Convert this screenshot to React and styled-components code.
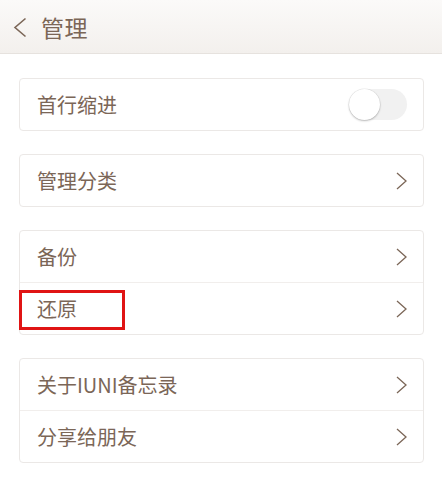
import styled, {createGlobalStyle} from 'styled-components';

const Global = createGlobalStyle`
    html, body {
        margin: 0;
        padding: 0;
        background: #ffffff;
    }
    body {
        font-family: "Noto Sans CJK SC", "Noto Sans", sans-serif;
        color: #7b6657;
    }
`;

const Chevron = ({left}) => (
    <svg width={left ? 14 : 11} height={left ? 21 : 18} viewBox={left ? '0 0 14 21' : '0 0 11 18'} fill="none">
        {left ? (
            <path d="M12.5 1.5 L2 10.5 L12.5 19.5" stroke="#7b6657" strokeWidth="1.6" />
        ) : (
            <path d="M1 1 L10 9 L1 17" stroke="#7b6657" strokeWidth="1.3" />
        )}
    </svg>
);

export default function App() {
    return (
        <Page>
            <Global />
            <Header>
                <BackButton><Chevron left /></BackButton>
                <Title>管理</Title>
            </Header>
            <Content>
                <Card>
                    <Row>
                        <Label>首行缩进</Label>
                        <Toggle><Knob /></Toggle>
                    </Row>
                </Card>
                <Card>
                    <Row>
                        <Label>管理分类</Label>
                        <Chevron />
                    </Row>
                </Card>
                <Card>
                    <Row>
                        <Label>备份</Label>
                        <Chevron />
                    </Row>
                    <Row divided>
                        <Label>还原</Label>
                        <Chevron />
                        <Highlight />
                    </Row>
                </Card>
                <Card>
                    <Row>
                        <Label>关于IUNI备忘录</Label>
                        <Chevron />
                    </Row>
                    <Row divided>
                        <Label>分享给朋友</Label>
                        <Chevron />
                    </Row>
                </Card>
            </Content>
        </Page>
    );
}

const Page = styled.div`
    width: 442px;
    min-height: 491px;
    background: #ffffff;
`;

const Header = styled.header`
    height: 54px;
    display: flex;
    align-items: center;
    background: linear-gradient(180deg, #fbfaf9 0%, #f3f0ed 100%);
    border-bottom: 1px solid #e6e2de;
    box-sizing: border-box;
`;

const BackButton = styled.div`
    width: 41px;
    padding-left: 13px;
    box-sizing: border-box;
    display: flex;
    align-items: center;
    margin-top: 1px;
`;

const Title = styled.h1`
    margin: 0;
    font-size: 23px;
    font-weight: 400;
    color: #7b6657;
    letter-spacing: 0.5px;
`;

const Content = styled.main`
    padding: 24px 18px 0 19px;
    display: flex;
    flex-direction: column;
    gap: 23px;
`;

const Card = styled.section`
    border: 1px solid #ebe8e6;
    border-radius: 4px;
    background: #fff;
`;

const Row = styled.div`
    position: relative;
    height: 51px;
    display: flex;
    align-items: center;
    justify-content: space-between;
    padding: 0 16px 0 17px;
    border-top: ${({divided}) => (divided ? '1px solid #f1eeec' : 'none')};
    box-sizing: ${({divided}) => (divided ? 'content-box' : 'content-box')};
`;

const Label = styled.span`
    font-size: 20px;
    line-height: 1;
    color: #7b6657;
`;

const Toggle = styled.div`
    width: 58px;
    height: 31px;
    border-radius: 16px;
    background: #f1f1f1;
    position: relative;
`;

const Knob = styled.div`
    position: absolute;
    left: 0;
    top: 0;
    width: 31px;
    height: 31px;
    border-radius: 50%;
    background: #fff;
    box-shadow: 0 1px 2px rgba(0,0,0,.25), 0 0 0 0.5px rgba(0,0,0,.08);
`;

const Highlight = styled.div`
    position: absolute;
    left: -1px;
    top: 7px;
    width: 100px;
    height: 34px;
    border: 3px solid #e01414;
`;
